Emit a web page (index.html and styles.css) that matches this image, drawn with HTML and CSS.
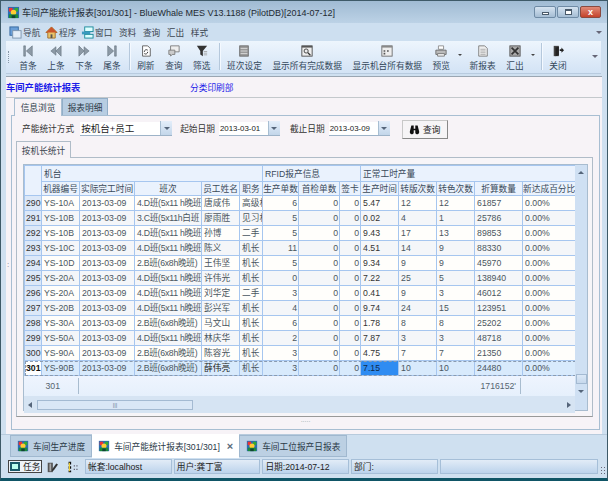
FILE: index.html
```html
<!DOCTYPE html>
<html lang="zh-CN">
<head>
    <meta charset="UTF-8">
    <title>车间产能统计报表</title>
    <link rel="stylesheet" href="styles.css">
</head>
<body>
    <svg class="defs" width="0" height="0">
        <symbol id="app" viewBox="0 0 14 14">
            <rect x="1" y="1" width="12" height="12" fill="#2a6db5"/>
            <rect x="2" y="2" width="4" height="4" fill="#e33"/>
            <rect x="8" y="2" width="4" height="4" fill="#3a3"/>
            <circle cx="7" cy="7" r="3" fill="#fc3"/>
            <rect x="2" y="9" width="10" height="4" fill="#1b8a3a"/>
            <rect x="5" y="10" width="4" height="3" fill="#143"/>
        </symbol>
        <symbol id="first" viewBox="0 0 14 14"><path d="M2 1h2v12H2zM12 1v12L5 7z" fill="#8d9aa6" stroke="#5d6a75" stroke-width=".6"/></symbol>
        <symbol id="prev" viewBox="0 0 14 14"><path d="M7 2v10L1 7zM13 1v12L7 7z" fill="#8d9aa6" stroke="#5d6a75" stroke-width=".6"/></symbol>
        <symbol id="next" viewBox="0 0 14 14"><path d="M1 1v12l6-6zM7 2v10l6-5z" fill="#8d9aa6" stroke="#5d6a75" stroke-width=".6"/></symbol>
        <symbol id="last" viewBox="0 0 14 14"><path d="M10 1h2v12h-2zM2 1v12l7-6z" fill="#8d9aa6" stroke="#5d6a75" stroke-width=".6"/></symbol>
        <symbol id="refresh" viewBox="0 0 14 14"><path d="M3 1h6l3 3v9H3z" fill="#fff" stroke="#555"/><path d="M5 8a2.5 2.5 0 0 1 4-2M9 8a2.5 2.5 0 0 1-4 2" fill="none" stroke="#222"/></symbol>
        <symbol id="query" viewBox="0 0 14 14"><path d="M3 1h10v7H3z" fill="#eee" stroke="#777"/><path d="M1 6h7v5H5l-2 2v-2H1z" fill="#ccc" stroke="#777"/></symbol>
        <symbol id="funnel" viewBox="0 0 14 14"><path d="M1 1h12L8 7v6L5 11V7z" fill="#333"/><path d="M9 7h4v1H9zM9 9h4v1H9zM9 11h4v1H9z" fill="#999"/></symbol>
        <symbol id="list" viewBox="0 0 14 14"><rect x="2" y="1" width="10" height="12" fill="#9a9a9a" stroke="#666"/><path d="M3 4h8M3 7h8M3 10h8" stroke="#ddd"/></symbol>
        <symbol id="allrec" viewBox="0 0 14 14"><rect x="1" y="1" width="12" height="12" fill="#eee" stroke="#444"/><rect x="1" y="1" width="12" height="2" fill="#555"/><circle cx="6" cy="7" r="2.4" fill="none" stroke="#333"/><path d="M8 9l3 3" stroke="#333" stroke-width="1.4"/></symbol>
        <symbol id="machine" viewBox="0 0 14 14"><rect x="1" y="1" width="12" height="12" fill="#eee" stroke="#666"/><rect x="1" y="1" width="12" height="2" fill="#888"/><path d="M3 6h2v2H3zM7 6h2v2H7zM3 9h2v2H3z" fill="#555"/></symbol>
        <symbol id="print" viewBox="0 0 14 14"><path d="M4 1h6v4H4z" fill="#fff" stroke="#888"/><path d="M1 6h12v5H1z" fill="#bbb" stroke="#666"/><path d="M3 10h8v3H3z" fill="#eee" stroke="#777"/></symbol>
        <symbol id="doc" viewBox="0 0 14 14"><path d="M2 1h7l3 3v9H2z" fill="#eee" stroke="#777"/><path d="M4 5h6M4 7h6M4 9h6M4 11h6" stroke="#aaa"/></symbol>
        <symbol id="excel" viewBox="0 0 14 14"><rect x="1" y="1" width="12" height="12" fill="#aaa" stroke="#555"/><path d="M3 3l8 8M11 3l-8 8" stroke="#333" stroke-width="2"/></symbol>
        <symbol id="exit" viewBox="0 0 14 14"><path d="M2 1h6v12H2z" fill="#444"/><path d="M8 2l-4 1v10l4-1z" fill="#222"/><path d="M9 5h2V3l3 3-3 3V7H9z" fill="#222"/></symbol>
        <symbol id="nav" viewBox="0 0 14 14"><rect x="1" y="1" width="9" height="9" fill="#6a9fd8" stroke="#36689e"/><rect x="4" y="5" width="9" height="8" fill="#e4eef8" stroke="#7d95ad"/></symbol>
        <symbol id="home" viewBox="0 0 14 14"><path d="M7 1L1 7h2v6h8V7h2z" fill="#e9c46a" stroke="#a5702a"/><path d="M7 1L1 7h12z" fill="#c9552b"/><rect x="6" y="9" width="2" height="4" fill="#555"/></symbol>
        <symbol id="wins" viewBox="0 0 14 14"><rect x="4" y="1" width="9" height="5" fill="#dff" stroke="#1a8a9a"/><rect x="1" y="6" width="9" height="3" fill="#3a9ac0"/><rect x="4" y="9" width="9" height="4" fill="#dff" stroke="#1a8a9a"/></symbol>
        <symbol id="binoc" viewBox="0 0 14 14"><path d="M3 2h3v4h2V2h3l2 8a2.5 2.5 0 0 1-5 1V8H6v3a2.5 2.5 0 0 1-5-1z" fill="#111"/></symbol>
        <symbol id="door" viewBox="0 0 14 14"><path d="M2 2h6v11H2z" fill="#555"/><path d="M4 3h2v9H4z" fill="#aaa"/><path d="M7 10l5-7 2 1-5 7-2 1z" fill="#333"/></symbol>
        <symbol id="dots" viewBox="0 0 14 14"><path d="M3 1h3v3H3zM3 6h3v3H3zM3 11h3v2H3z" fill="#111"/><path d="M4 2v10" stroke="#ec3" stroke-width="1.4"/><path d="M9 5h1.500v1.500H9zM12 5h1.500v1.500H12zM9 9h1.500v1.500H9zM12 9h1.500v1.500H12z" fill="#667"/></symbol>
    </svg>

    <div class="window">
        <div class="titlebar">
            <svg class="title-icon"><use href="#app"/></svg>
            <span class="title-text">车间产能统计报表[301/301] - BlueWhale MES V13.1188 (PilotDB)[2014-07-12]</span>
            <div class="win-btns">
                <span class="win-btn"><i class="glyph-min"></i></span>
                <span class="win-btn"><i class="glyph-max"></i></span>
                <span class="win-btn close">x</span>
            </div>
        </div>

        <div class="menubar">
            <span class="menu has-ico"><svg class="ico"><use href="#nav"/></svg>导航</span>
            <span class="menu has-ico"><svg class="ico"><use href="#home"/></svg>程序</span>
            <span class="menu"><svg class="ico"><use href="#wins"/></svg>窗口</span>
            <span class="menu">资料</span>
            <span class="menu">查询</span>
            <span class="menu">汇出</span>
            <span class="menu">样式</span>
            <span class="menu-more"></span>
        </div>

        <div class="toolbar">
            <span class="grip"></span>
            <div class="tool"><svg class="ico"><use href="#first"/></svg>首条</div>
            <div class="tool"><svg class="ico"><use href="#prev"/></svg>上条</div>
            <div class="tool"><svg class="ico"><use href="#next"/></svg>下条</div>
            <div class="tool"><svg class="ico"><use href="#last"/></svg>尾条</div>
            <span class="sep"></span>
            <div class="tool"><svg class="ico"><use href="#refresh"/></svg>刷新</div>
            <div class="tool"><svg class="ico"><use href="#query"/></svg>查询</div>
            <div class="tool"><svg class="ico"><use href="#funnel"/></svg>筛选</div>
            <span class="sep"></span>
            <div class="tool"><svg class="ico"><use href="#list"/></svg>班次设定</div>
            <div class="tool"><svg class="ico"><use href="#allrec"/></svg>显示所有完成数据</div>
            <div class="tool"><svg class="ico"><use href="#machine"/></svg>显示机台所有数据</div>
            <div class="tool"><svg class="ico"><use href="#print"/></svg>预览</div>
            <span class="tool-drop"></span>
            <div class="tool"><svg class="ico"><use href="#doc"/></svg>新报表</div>
            <div class="tool"><svg class="ico"><use href="#excel"/></svg>汇出</div>
            <span class="tool-drop"></span>
            <span class="sep"></span>
            <div class="tool"><svg class="ico"><use href="#exit"/></svg>关闭</div>
            <span class="tool-more"></span>
        </div>

        <div class="content">
            <span class="side-grip">:</span>
            <div class="report-head">
                <span class="report-title">车间产能统计报表</span>
                <span class="report-dept">分类印刷部</span>
            </div>

            <div class="tabs">
                <span class="tab active">信息浏览</span>
                <span class="tab">报表明细</span>
            </div>

            <div class="panel">
                <div class="filters">
                    <label class="lbl">产能统计方式</label>
                    <div class="combo wide"><span>按机台+员工</span><i class="drop"></i></div>
                    <label class="lbl gap-a">起始日期</label>
                    <div class="combo date"><span>2013-03-01</span><i class="drop"></i></div>
                    <label class="lbl gap-b">截止日期</label>
                    <div class="combo date"><span>2013-03-09</span><i class="drop"></i></div>
                    <button class="search"><svg class="ico-b"><use href="#binoc"/></svg>查询</button>
                </div>

                <div class="subtabs"><span class="subtab">按机长统计</span></div>

                <div class="subpanel">
                    <div class="grid">
                        <div class="grid-main">
                            <table>
                                <colgroup>
                                    <col class="c17"><col class="c38"><col class="c55"><col class="c67"><col class="c38"><col class="c23"><col class="c36"><col class="c41"><col class="c21"><col class="c38"><col class="c38"><col class="c38"><col class="c48"><col class="c53">
                                </colgroup>
                                <thead>
                                    <tr class="h1">
                                        <th rowspan="2" class="corner"></th>
                                        <th colspan="5" class="l">机台</th>
                                        <th colspan="3" class="l">RFID报产信息</th>
                                        <th colspan="5" class="l">正常工时产量</th>
                                    </tr>
                                    <tr class="h2">
                                        <th>机器编号</th><th>实际完工时间</th><th>班次</th><th>员工姓名</th><th>职务</th>
                                        <th>生产单数</th><th>首检单数</th><th>签卡</th><th>生产时间</th><th>转版次数</th><th>转色次数</th><th>折算数量</th><th>新达成百分比</th>
                                    </tr>
                                </thead>
                                <tbody>
                                    <tr><th>290</th><td>YS-10A</td><td>2013-03-09</td><td>4.D班(5x11 h晚班</td><td>唐咸伟</td><td>高级机</td><td class="n">6</td><td class="n">0</td><td class="n">0</td><td class="d">5.47</td><td>12</td><td>12</td><td>61857</td><td>0.00%</td></tr>
                                    <tr><th>291</th><td>YS-10B</td><td>2013-03-09</td><td>3.C班(5x11h白班</td><td>廖雨胜</td><td>见习机</td><td class="n">5</td><td class="n">0</td><td class="n">0</td><td class="d">0.02</td><td>4</td><td>1</td><td>25786</td><td>0.00%</td></tr>
                                    <tr><th>292</th><td>YS-10B</td><td>2013-03-09</td><td>4.D班(5x11 h晚班</td><td>孙博</td><td>二手</td><td class="n">5</td><td class="n">0</td><td class="n">0</td><td class="d">9.43</td><td>17</td><td>13</td><td>89853</td><td>0.00%</td></tr>
                                    <tr><th>293</th><td>YS-10C</td><td>2013-03-09</td><td>4.D班(5x11 h晚班</td><td>陈义</td><td>机长</td><td class="n">11</td><td class="n">0</td><td class="n">0</td><td class="d">4.51</td><td>14</td><td>9</td><td>88330</td><td>0.00%</td></tr>
                                    <tr><th>294</th><td>YS-10D</td><td>2013-03-09</td><td>2.B班(6x8h晚班)</td><td>王伟坚</td><td>机长</td><td class="n">5</td><td class="n">0</td><td class="n">0</td><td class="d">9.34</td><td>9</td><td>9</td><td>45970</td><td>0.00%</td></tr>
                                    <tr><th>295</th><td>YS-20A</td><td>2013-03-09</td><td>4.D班(5x11 h晚班</td><td>许伟光</td><td>机长</td><td class="n">0</td><td class="n">0</td><td class="n">0</td><td class="d">7.22</td><td>25</td><td>5</td><td>138940</td><td>0.00%</td></tr>
                                    <tr><th>296</th><td>YS-20A</td><td>2013-03-09</td><td>4.D班(5x11 h晚班</td><td>刘华定</td><td>二手</td><td class="n">3</td><td class="n">0</td><td class="n">0</td><td class="d">0.41</td><td>9</td><td>3</td><td>46012</td><td>0.00%</td></tr>
                                    <tr><th>297</th><td>YS-20B</td><td>2013-03-09</td><td>4.D班(5x11 h晚班</td><td>彭兴军</td><td>机长</td><td class="n">4</td><td class="n">0</td><td class="n">0</td><td class="d">9.74</td><td>24</td><td>15</td><td>123951</td><td>0.00%</td></tr>
                                    <tr><th>298</th><td>YS-30A</td><td>2013-03-09</td><td>2.B班(6x8h晚班)</td><td>马文山</td><td>机长</td><td class="n">6</td><td class="n">0</td><td class="n">0</td><td class="d">1.78</td><td>8</td><td>8</td><td>25202</td><td>0.00%</td></tr>
                                    <tr><th>299</th><td>YS-50A</td><td>2013-03-09</td><td>4.D班(5x11 h晚班</td><td>林庆华</td><td>机长</td><td class="n">2</td><td class="n">0</td><td class="n">0</td><td class="d">7.87</td><td>3</td><td>3</td><td>48718</td><td>0.00%</td></tr>
                                    <tr><th>300</th><td>YS-90A</td><td>2013-03-09</td><td>2.B班(6x8h晚班)</td><td>陈容光</td><td>机长</td><td class="n">3</td><td class="n">0</td><td class="n">0</td><td class="d">4.75</td><td>7</td><td>7</td><td>21350</td><td>0.00%</td></tr>
                                    <tr class="selected"><th>301</th><td>YS-90B</td><td>2013-03-09</td><td>2.B班(6x8h晚班)</td><td class="strong">薛伟亮</td><td>机长</td><td class="n">3</td><td class="n">0</td><td class="n">0</td><td class="d cur">7.15</td><td>10</td><td>10</td><td>24480</td><td>0.00%</td></tr>
                                </tbody>
                            </table>
                            <div class="grid-foot">
                                <span class="foot-count">301</span>
                                <span class="foot-total">1716152'</span>
                            </div>
                            <div class="hscroll">
                                <i class="arrow-l"></i>
                                <div class="hthumb">|||</div>
                                <i class="arrow-r"></i>
                            </div>
                        </div>
                        <div class="vscroll">
                            <i class="arrow-u"></i>
                            <div class="vthumb"></div>
                            <i class="arrow-d"></i>
                        </div>
                    </div>
                </div>
                <div class="splitter">.....</div>
            </div>
        </div>

        <div class="doctabs">
            <span class="doctab"><svg class="ico"><use href="#app"/></svg>车间生产进度</span>
            <span class="doctab active"><svg class="ico"><use href="#app"/></svg>车间产能统计报表[301/301]<b class="doc-x">×</b></span>
            <span class="doctab"><svg class="ico"><use href="#app"/></svg>车间工位报产日报表</span>
        </div>

        <div class="statusbar">
            <span class="task"><i class="task-ico"></i>任务</span>
            <span class="st-ico"><svg class="ico"><use href="#door"/></svg></span>
            <span class="st-ico"><svg class="ico"><use href="#dots"/></svg></span>
            <span class="cell c-a">帐套:localhost</span>
            <span class="cell c-a">用户:龚丁富</span>
            <span class="cell c-a">日期:2014-07-12</span>
            <span class="cell c-a">部门:</span>
            <span class="cell c-z"></span>
            <span class="sizer"></span>
        </div>
    </div>
</body>
</html>
```

FILE: styles.css
```css
* {
    box-sizing: border-box;
}

body {
    margin: 0;
    width: 608px;
    height: 481px;
    overflow: hidden;
    font-family: "Liberation Sans", "Noto Sans CJK SC", sans-serif;
    font-size: 8.7px;
    color: #3c4650;
}

.defs {
    position: absolute;
}

.window {
    display: flex;
    flex-direction: column;
    width: 608px;
    height: 481px;
    background: #cfe0f0;
    border: 1px solid #3e5a68;
    border-bottom: 3px solid #0f5566;
}

/* title bar */
.titlebar {
    display: flex;
    align-items: center;
    height: 22px;
    flex: none;
    padding-left: 6px;
    background: linear-gradient(#a0bbd3, #bcd2e6);
    font-size: 9px;
    color: #1f2a33;
}

.title-icon {
    width: 13px;
    height: 13px;
    margin-right: 2px;
}

.title-text {
    white-space: nowrap;
}

.win-btns {
    display: flex;
    margin-left: auto;
    margin-right: 6px;
    gap: 1px;
}

.win-btn {
    display: flex;
    align-items: center;
    justify-content: center;
    width: 22px;
    height: 12px;
    border: 1px solid #6f8ba5;
    border-radius: 2px;
    background: linear-gradient(#d5e3f0, #a5bdd4);
}

.win-btn.close {
    width: 21px;
    background: linear-gradient(#e08a78, #c5432b);
    border-color: #8a4a40;
    color: #fff;
    font-weight: bold;
    line-height: 10px;
}

.glyph-min {
    width: 7px;
    height: 3px;
    margin-top: 3px;
    background: #fff;
    border: 1px solid #4a5a6a;
}

.glyph-max {
    width: 7px;
    height: 6px;
    background: #fff;
    border: 1px solid #4a5a6a;
    border-top-width: 2px;
}

/* menu */
.menubar {
    display: flex;
    align-items: center;
    height: 18px;
    flex: none;
    padding-left: 8px;
    background: #cddff0;
}

.menu {
    display: flex;
    align-items: center;
    margin-right: 6.6px;
    white-space: nowrap;
}

.menu.has-ico {
    margin-right: 4.6px;
}

.ico {
    width: 12px;
    height: 12px;
    flex: none;
}

.menu .ico {
    width: 13px;
    height: 13px;
    margin-right: 1px;
}

.menu-more {
    margin-left: auto;
    margin-right: 5px;
    border: 3px solid transparent;
    border-top: 3px solid #667;
    border-bottom: 0;
}

/* toolbar */
.toolbar {
    display: flex;
    height: 33px;
    flex: none;
    margin: 0 6px 0 5px;
    background: linear-gradient(#edf5fd, #d3e3f5);
    border-bottom: 1px solid #b8cbdf;
}

.grip {
    width: 6px;
    margin: 10px 0 10px 2px;
    border-left: 1px dotted #8898a8;
}

.tool {
    display: flex;
    flex-direction: column;
    align-items: center;
    padding: 4px 5.3px 0;
    gap: 2px;
    white-space: nowrap;
    color: #33475a;
}

.sep {
    width: 1px;
    margin: 2px 2px 3px 3px;
    background: #b5c8dc;
    box-shadow: 1px 0 0 #f4f9ff;
}

.tool-drop {
    display: flex;
    justify-content: center;
    width: 9px;
    padding-top: 13px;
}

.tool-drop::before {
    content: "";
    height: 0;
    border: 2px solid transparent;
    border-top: 2px solid #444;
    border-bottom: 0;
}

.tool-more {
    width: 0;
    height: 0;
    margin: 14px 3px 0 auto;
    border: 3px solid transparent;
    border-top: 3px solid #667;
    border-bottom: 0;
}

/* content */
.content {
    position: relative;
    display: flex;
    flex-direction: column;
    height: 358px;
    flex: none;
    margin: 2px 5px 0;
    background: #f7f3f7;
    border-top: 1px solid #9aa6b2;
}

.side-grip {
    position: absolute;
    left: 1px;
    top: 183px;
    color: #778;
    font-size: 8px;
}

.report-head {
    display: flex;
    align-items: center;
    height: 21px;
    flex: none;
    border-bottom: 1px solid #c4c8cc;
    color: #1a1ae8;
}

.report-title {
    width: 184px;
    font-size: 9.3px;
    font-weight: bold;
}

.tabs {
    display: flex;
    height: 18px;
    flex: none;
    padding-left: 8px;
    margin-bottom: -1px;
}

.tab {
    display: flex;
    align-items: center;
    justify-content: center;
    width: 46px;
    background: #b8cde2;
    border: 1px solid #92aec8;
    border-bottom: 0;
    color: #2e3c4a;
}

.tab.active {
    width: 48px;
    background: #f7f3f7;
    border-color: #a8bed2;
    position: relative;
    z-index: 1;
}

.panel {
    display: flex;
    flex-direction: column;
    height: 315px;
    flex: none;
    margin: 0 2px 0 5px;
    border: 1px solid #a8bed2;
}

.filters {
    display: flex;
    align-items: center;
    height: 25px;
    flex: none;
    padding-left: 10px;
}

.lbl {
    white-space: nowrap;
    color: #333;
}

.combo {
    display: flex;
    align-items: center;
    height: 14px;
    margin-left: 4px;
    background: #fff;
    border-bottom: 1px solid #9db3c8;
    color: #222;
}

.combo span {
    flex: 1;
    padding-left: 1px;
}

.combo.wide {
    width: 92px;
    margin-left: 6px;
    font-size: 9.5px;
}

.combo.date {
    width: 61px;
    font-size: 7.9px;
}

.drop {
    display: flex;
    align-items: center;
    justify-content: center;
    width: 12px;
    height: 14px;
    background: linear-gradient(#e4eefa, #c3d6ea);
    border-left: 1px solid #a8bed2;
}

.drop::after {
    content: "";
    border: 3px solid transparent;
    border-top: 3px solid #55657a;
    border-bottom: 0;
}

.gap-a {
    margin-left: 8px;
}

.gap-b {
    margin-left: 10px;
}

.search {
    display: flex;
    align-items: center;
    justify-content: center;
    gap: 3px;
    width: 46px;
    height: 19px;
    margin-left: 12px;
    margin-top: 2px;
    padding: 0;
    background: #f6f4f6;
    border: 1px solid #c8c8c8;
    border-right-color: #888;
    border-bottom-color: #888;
    font: inherit;
    color: #222;
}

.ico-b {
    width: 11px;
    height: 11px;
}

.subtabs {
    display: flex;
    height: 17px;
    flex: none;
    padding-left: 4px;
    margin-bottom: -1px;
}

.subtab {
    display: flex;
    align-items: center;
    justify-content: center;
    width: 55px;
    background: #f7f3f7;
    border: 1px solid #b0bcc8;
    border-bottom: 0;
    position: relative;
    z-index: 1;
}

.subpanel {
    height: 260px;
    flex: none;
    margin: 0 6px 0 4px;
    padding: 6px 4px 5px 6px;
    border: 1px solid #b0bcc8;
    border-bottom-color: #999;
    background: #f7f5f8;
}

.grid {
    display: flex;
    width: 565px;
    height: 247px;
    border: 1px solid #a8bccf;
    background: #e9f2fd;
}

.grid-main {
    width: 551px;
    flex: none;
}

/* table */
table {
    width: 551px;
    table-layout: fixed;
    border-collapse: collapse;
    background: #fffefb;
}

.c17 { width: 17px; }
.c21 { width: 21px; }
.c23 { width: 23px; }
.c36 { width: 36px; }
.c38 { width: 38px; }
.c41 { width: 41px; }
.c48 { width: 48px; }
.c53 { width: 53px; }
.c55 { width: 55px; }
.c67 { width: 67px; }

th, td {
    padding: 0 2px;
    border: 1px solid #a6c6ef;
    white-space: nowrap;
    overflow: hidden;
    font-weight: normal;
    text-align: left;
    line-height: 12px;
}

thead th {
    background: #eaf2fd;
    color: #3a4a5a;
    text-align: center;
}

thead th.l {
    text-align: left;
}

.h1 {
    height: 16px;
}

.h2 {
    height: 14px;
}

.h2 th {
    padding: 0;
}

tbody tr {
    height: 15px;
}

tbody tr:nth-child(even) {
    background: #f4f6f9;
}

tbody th {
    padding: 0 1px;
    background: #dce8f8;
    text-align: center;
    color: #333;
}

tbody td {
    color: #4a5660;
}

tbody td:nth-child(4) {
    letter-spacing: -0.28px;
}

td.n {
    text-align: right;
    padding-right: 1px;
}

td.d {
    color: #333;
}

tbody tr.selected {
    background: #d8eafc;
    outline: 1px dashed #8a9bb0;
    outline-offset: -1px;
}

tr.selected th {
    background: #fff;
    font-weight: bold;
    color: #111;
}

td.strong {
    color: #222;
}

td.cur {
    background: #2f8cf2;
    color: #0f2a4a;
}

.grid-foot {
    display: flex;
    align-items: center;
    height: 20px;
    background: linear-gradient(#eef4fe, #e6f0fc);
    color: #55646f;
}

.foot-count {
    width: 55px;
    padding-right: 18px;
    height: 16px;
    line-height: 16px;
    text-align: right;
    border-right: 1px solid #a8bccf;
}

.foot-total {
    width: 442px;
    height: 16px;
    line-height: 16px;
    padding-right: 4px;
    text-align: right;
    border-right: 1px solid #a8bccf;
}

.hscroll {
    display: flex;
    align-items: center;
    height: 17px;
    padding-left: 4px;
    background: #d6e4f3;
}

.arrow-l {
    border: 3px solid transparent;
    border-right: 4px solid #55657a;
    border-left: 0;
}

.hthumb {
    width: 156px;
    height: 10px;
    margin-left: 5px;
    background: #dae7f6;
    border: 1px solid #a4bad2;
    text-align: center;
    font-size: 6px;
    line-height: 8px;
    color: #6e849a;
}

.arrow-r {
    margin-left: auto;
    margin-right: 4px;
    border: 3px solid transparent;
    border-left: 4px solid #55657a;
    border-right: 0;
}

.vscroll {
    display: flex;
    flex-direction: column;
    align-items: center;
    width: 12px;
    flex: none;
    padding-top: 6px;
    background: #cfe0f3;
}

.arrow-u {
    border: 3px solid transparent;
    border-bottom: 3px solid #55657a;
    border-top: 0;
}

.vthumb {
    width: 11px;
    height: 10px;
    margin-top: auto;
    background: linear-gradient(#dbe8f7, #c6d8ec);
    border: 1px solid #a4bad2;
}

.arrow-d {
    margin: 6px 0 17px;
    border: 3px solid transparent;
    border-top: 3px solid #55657a;
    border-bottom: 0;
}

.splitter {
    height: 10px;
    text-align: center;
    font-size: 7px;
    line-height: 5px;
    color: #9aa;
}

/* bottom tabs */
.doctabs {
    display: flex;
    height: 25px;
    flex: none;
    padding-left: 9px;
    background: #cfe0f0;
    border-top: 1px solid #b8cbdd;
}

.doctab {
    display: flex;
    align-items: center;
    gap: 4px;
    height: 22px;
    padding: 0 6px;
    background: #bcd0e3;
    border: 1px solid #a0b8cf;
    white-space: nowrap;
    color: #2b3a48;
}

.doctab.active {
    height: 24px;
    background: #fff;
    border: 0;
    margin-top: -1px;
    width: 147px;
}

.doc-x {
    margin-left: 3px;
    font-size: 11px;
    color: #5a6a7a;
}

/* status bar */
.statusbar {
    display: flex;
    align-items: center;
    gap: 2px;
    height: 15px;
    flex: none;
    padding-left: 7px;
    background: #cfe0f0;
}

.task {
    display: flex;
    align-items: center;
    gap: 3px;
    width: 34px;
    height: 13px;
    padding-left: 1px;
    background: #eef3f8;
    border: 1px solid #444;
    color: #222;
}

.task-ico {
    width: 10px;
    height: 9px;
    border: 2px solid #1a5a6a;
    background: #bfe;
}

.st-ico {
    display: flex;
    justify-content: center;
    width: 15px;
    margin-right: 3.5px;
}

.cell {
    height: 15px;
    line-height: 14px;
    padding-left: 2px;
    background: linear-gradient(#e2ecf7, #bcd3ec);
    border: 1px solid #a6bfd8;
    color: #222;
}

.c-a {
    width: 86.7px;
}

.c-z {
    width: 158px;
}

.sizer {
    width: 7px;
    height: 8px;
    margin-top: 6px;
    background: radial-gradient(circle, #667 0.8px, transparent 1px) 0 0 / 3px 3px;
}
```
